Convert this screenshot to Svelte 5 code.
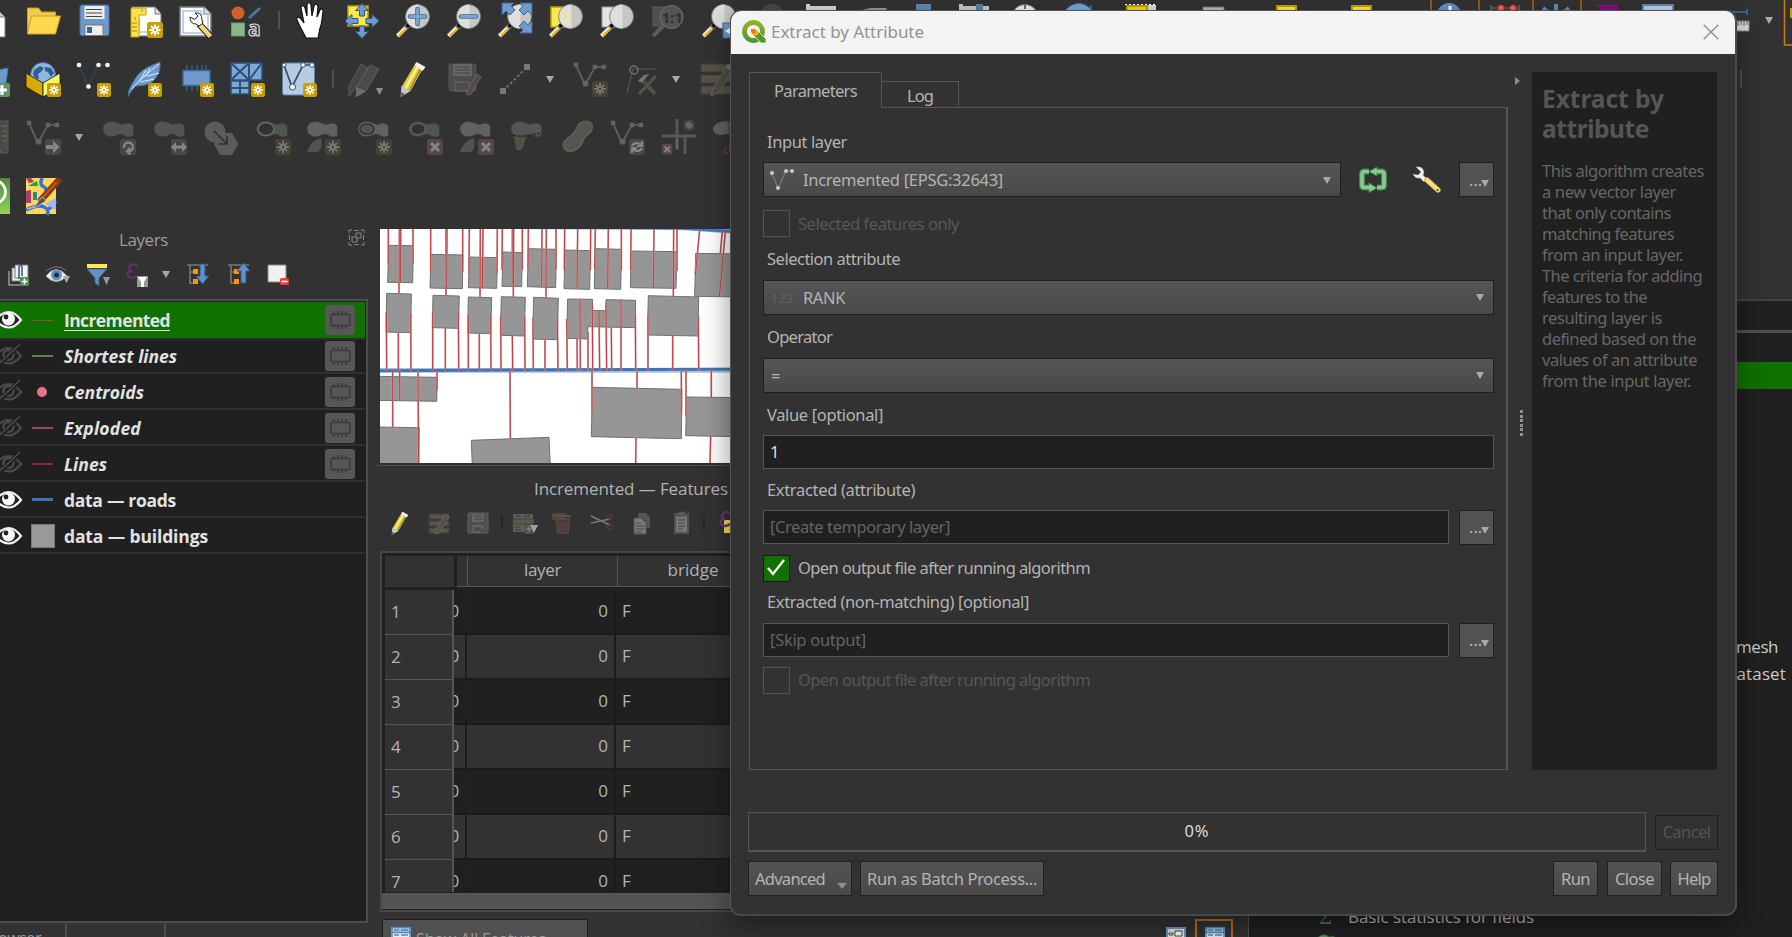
<script>
  const fileBar = [
    ['page', 51], ['folder', 51], ['floppy', 51], ['layout', 51], ['manager', 51], ['style', 51], ['sep', 14],
    ['hand', 51], ['pan', 50], ['zoomIn', 51], ['zoomOut', 51], ['zoomFull', 51], ['zoomSel', 51], ['zoomLayer', 51],
    ['zoomNative', 51], ['zoomLast', 51]
  ];
  const layerBar = [
    ['addVec', 51], ['globe', 51], ['newShp', 51], ['feather', 51], ['chip', 51], ['mesh', 52], ['vbox', 51], ['sep', 17],
    ['pencils', 46], ['pencil', 51], ['saveEdit', 52], ['segment', 50], ['drop', 20], ['newFeat', 60], ['tools', 48],
    ['drop', 16], ['rows', 66]
  ];
  const editBar = [
    ['ruler', 51], ['moveFeat', 51], ['drop', 22], ['rotate', 57], ['scale', 46], ['simplify', 58], ['addRing', 43],
    ['addPart', 58], ['fillRing', 44], ['delRing', 58], ['delPart', 44], ['reshape', 57], ['offset', 46], ['split', 52],
    ['trim', 52], ['merge', 40]
  ];
  const layers = [
    { name: 'Incremented', w: 106, kind: 'on', sym: 'line', color: '#965033', chip: true },
    { name: 'Shortest lines', w: 113, kind: 'off', sym: 'line', color: '#5f7f52', chip: true },
    { name: 'Centroids', w: 80, kind: 'off', sym: 'dot', color: '#e8718d', chip: true },
    { name: 'Exploded', w: 77, kind: 'off', sym: 'line', color: '#a34560', chip: true },
    { name: 'Lines', w: 43, kind: 'off', sym: 'line', color: '#8f2c32', chip: true },
    { name: 'data — roads', w: 112, kind: 'vis', sym: 'road', color: '#3f73b5' },
    { name: 'data — buildings', w: 144, kind: 'vis', sym: 'box', color: '#999' }
  ];
  const tableTools = [
    ['toggle', 40], ['multi', 38], ['tsave', 40], ['sep', 8], ['trow', 38], ['trash', 37], ['cut', 41], ['copy', 39],
    ['paste', 39], ['sep', 8], ['selx', 44]
  ];
  const help = [
    ['This algorithm creates', 162], ['a new vector layer', 134], ['that only contains', 129], ['matching features', 132],
    ['from an input layer.', 141], ['The criteria for adding', 160], ['features to the', 105], ['resulting layer is', 120],
    ['defined based on the', 154], ['values of an attribute', 155], ['from the input layer.', 149]
  ];
  const rows = [1, 2, 3, 4, 5, 6, 7];

  const buildings = [
    '56,76 130,77 128,188 53,187', '183,103 279,105 277,206 180,204', '298,111 382,113 380,205 295,203',
    '399,96 457,98 455,200 396,199', '475,86 559,88 557,203 472,200', '585,90 661,92 659,208 582,206',
    '676,86 755,88 752,208 673,206', '784,93 921,95 918,205 781,203', '977,100 1200,103 1196,232 974,229',
    '50,220 124,222 122,338 48,336', '189,226 268,228 265,325 187,323', '295,231 365,233 362,341 293,339',
    '394,230 466,232 463,348 391,346', '491,232 565,235 562,359 488,357',
    '593,237 668,238 667,271 707,272 708,239 797,241 795,323 654,320 652,357 590,355',
    '835,227 986,231 984,348 832,345', '20,469 202,472 200,544 20,541', '20,621 148,623 146,740 20,740',
    '304,661 537,652 541,740 307,740', '667,502 936,508 934,656 664,650', '950,531 1200,534 1200,652 947,647'
  ];
  const reds = [
    '55,27 55,133', '129,27 129,133', '88,27 88,187', '92,27 92,187', '87,187 87,222', '182,27 182,155', '228,27 228,228',
    '231,27 230,205', '278,27 278,155', '298,27 297,160', '331,27 330,232', '339,27 337,205', '382,27 381,160', '397,27 396,150',
    '427,27 427,200', '431,27 430,232', '457,27 457,150', '475,27 474,145', '516,27 515,200', '529,27 528,234', '558,27 558,147',
    '584,27 583,150', '623,27 621,206', '662,27 661,150', '676,27 674,147', '715,27 713,207', '754,27 754,150', '783,27 782,150',
    '852,27 850,205', '911,27 910,229', '921,27 921,152', '989,30 976,165', '1057,34 1051,100', '1066,36 1048,231',
    '49,275 50,452', '85,337 85,452', '122,280 123,452', '188,275 188,452', '226,323 226,452', '265,275 266,452', '295,283 295,452',
    '328,340 328,452', '362,285 363,452', '392,287 393,452', '427,347 428,452', '464,290 465,452', '489,292 490,452',
    '525,358 525,452', '562,294 564,452', '590,297 592,452', '621,355 622,452', '630,236 631,452', '654,335 654,452',
    '667,252 668,452', '687,270 689,452', '708,253 710,452', '724,320 725,452', '753,238 753,452', '796,280 797,452',
    '834,285 834,452', '908,347 908,452', '985,290 986,452', '68,452 68,621', '89,452 89,542', '144,452 146,729', '201,452 201,510',
    '420,452 421,659', '666,452 666,578', '801,449 801,506', '934,449 934,583', '948,449 948,590', '1024,447 1024,534',
    '798,651 797,729', '1022,646 1020,729'
  ];

  function fit(node, width) {
    node.style.letterSpacing = '0px';
    const natural = node.getBoundingClientRect().width;
    node.style.letterSpacing = (width - natural) / node.textContent.length + 'px';
  }
</script>

{#snippet badge(x, y, s = 16)}
  <g transform="translate({x} {y}) scale({s / 16})">
    <rect width="16" height="16" rx="2.5" fill="#c4a000" />
    <path d="M8 2.5v11M2.5 8h11M4 4l8 8M12 4l-8 8" stroke="#fff" stroke-width="1.8" />
    <circle cx="8" cy="8" r="1.2" fill="#c4a000" />
  </g>
{/snippet}

{#snippet dim(x, y, kind)}
  <g transform="translate({x} {y})" fill="none" stroke="#858585" stroke-width="1.8">
    <rect width="16" height="16" rx="2.5" stroke="none" fill={kind === 'star' ? '#454236' : kind === 'x' ? '#564749' : '#444849'} />
    {#if kind === 'star'}<path d="M8 2v12M2 8h12M4 4l8 8M12 4l-8 8" stroke-width="1.5" /><circle cx="8" cy="8" r="2" fill="#454236" stroke-width="1" />
    {:else if kind === 'x'}<path d="M4 4l8 8M12 4l-8 8" stroke-width="3" />
    {:else if kind === 'arrow'}<path d="M1 6h7V1.500l6.500 6.500L8 14.500V10H1z" fill="#858585" stroke="none" />
    {:else if kind === 'both'}<path d="M0 8l5-5v3.500h6V3l5 5-5 5V9.500H5V13z" fill="#858585" stroke="none" />
    {:else if kind === 'turn'}<path d="M4 9a4.500 4.500 0 1 1 4.500 3.500M10 9l-3 3.500 3.500 3" stroke-width="2.300" />
    {:else}<path d="M3 7a5 4 0 0 1 9-1M13 2v5H8M13 9a5 4 0 0 1-9 1M3 14V9h5" stroke-width="2.200" />{/if}
  </g>
{/snippet}

{#snippet blob(fill)}
  <path d="M2 11C1 5 7 1 14 3c4 1 6 3 9 2 5-2 9 0 9.500 3v7c0 3-4.500 4-8 2-4-3-7-1.500-10 0C9 19 3 17 2 11z" {fill} stroke="#3d3e3e" />
{/snippet}

{#snippet nodes(stroke, fill)}
  <path d="M4 4l9 20L23 6h9" fill="none" {stroke} stroke-width="2" />
  <path d="M2 2h4v4H2zM11 20h5v5h-5zM21 4h4v4h-4zM30 4h4v4h-4z" {fill} {stroke} stroke-width=".6" />
{/snippet}

{#snippet lens(kind)}
  <g transform="translate(-1.5 0)">
    <path d="M4 34l11-11" stroke="#777" stroke-width="5" />
    <path d="M4 34l8-8" stroke="#fff" stroke-width="3.400" /><path d="M5 34l7-7" stroke="#f5b400" stroke-width="2" />
    <circle cx="14.500" cy="23.500" r="1.900" fill="#000" />
    <circle cx="24" cy="14.500" r="12" fill="#c6c6c5" stroke="#777" stroke-width=".8" />
    <path d="M25 2.500a12 12 0 0 0 0 24z" fill="#dedede" />
    {#if kind === '+' || kind === '-'}
      <path d={kind === '+' ? 'M16.500 14.500h15M24 7v15' : 'M16.500 14.500h15'} stroke="#3b6795" stroke-width="4.600" stroke-linecap="round" />
      <path d={kind === '+' ? 'M16.500 14.500h15M24 7v15' : 'M16.500 14.500h15'} stroke="#7ba3d2" stroke-width="2.800" stroke-linecap="round" />
    {/if}
  </g>
{/snippet}

{#snippet pen(main, light, dark)}
  <g transform="translate(-1.5 0)">
    <path d="M8 26L21 4l8 4-12 22z" fill={main} /><path d="M12 27L24 6" stroke={light} stroke-width="2.600" /><path d="M16 29L27 8" stroke={dark} stroke-width="1.500" />
    <path d="M8 25l9 5-10 6z" fill="#c8c8c8" /><path d="M7 36l1-5 3 2z" fill="#555" /><path d="M21 4l2-3 9 5-3 4z" fill="#f4f4f4" />
  </g>
{/snippet}

{#snippet greyPen()}
  <path d="M14 27L27 6l6 4-13 21-8 4z" fill="#504c49" stroke="#696764" stroke-width=".8" /><path d="M27 6l2-3 6 4-2 4z" fill="#777" />
{/snippet}

{#snippet icon(name, size = 36)}
  <svg class="icon" width={size} height={size} viewBox="0 0 36 36" fill="none" aria-hidden="true">
    {#if name === 'page'}<path d="M4 6h18l9 9v20H4z" fill="#fff" stroke="#777" /><path d="M22 6v9h9z" fill="#ccc" stroke="#777" />
    {:else if name === 'folder'}
      <path d="M2.500 31V6h11l3 4h14v5" fill="#f5c94a" stroke="#c49a2a" /><path d="M2.500 32l4-18h29l-5 18z" fill="#fdd94f" stroke="#c8a029" />
    {:else if name === 'floppy'}
      <rect x="4" y="3" width="29" height="30.500" rx="2" fill="#6f99ca" stroke="#4673a5" /><rect x="8.500" y="4" width="20" height="13" fill="#eee" />
      <path d="M10 7.500h16M10 11h16M10 14.500h16" stroke="#444" stroke-width="1.200" /><rect x="9" y="23" width="18" height="10.500" fill="#eee" stroke="#777" /><rect x="11" y="25" width="5" height="6" fill="#32659a" />
    {:else if name === 'layout'}
      <path d="M5 5h23l6 7v22H5z" fill="#fff" stroke="#777" /><path d="M28 5v7h6" fill="#ddd" stroke="#777" /><path d="M12 17v13h12" stroke="#8fb0df" />
      <path d="M4 6h15v7h-7v22H4z" fill="#ffe04d" stroke="#c4a000" /><path d="M8 15v3M10 21H5M10 25H5M10 29H5M15 7v3" stroke="#a88900" />{@render badge(20, 20)}
    {:else if name === 'manager'}
      <path d="M2 5h24l7 7v22H2z" fill="#fff" stroke="#777" stroke-width="1.500" /><path d="M26 5v7h7" fill="#ddd" stroke="#777" /><path d="M5 9h18v3h7v19H5z" stroke="#a9c4ea" stroke-width="1.500" />
      <path d="M21 22l12 13" stroke="#222" stroke-width="6.500" /><path d="M22 23l10.500 11.500" stroke="#f4d47a" stroke-width="4.500" />
      <path d="M17 11q7-1 7 7l1 3-4 3-3-2q-6 0-6-7l5 2.500 3-3.500z" fill="#fff" stroke="#222" />
    {:else if name === 'style'}
      <circle cx="9" cy="11" r="6.500" fill="#d4602f" /><path d="M20 16L31 6" stroke="#4b739b" stroke-width="3" /><rect x="2.500" y="21" width="13" height="13" fill="#8ab58d" stroke="#6d9b70" />
      <text x="19" y="33.500" font-size="21" font-weight="700" fill="#333" stroke="#ddd" stroke-width="1.200">a</text>
    {:else if name === 'hand'}
      <path d="M12 36C8 28 6 25 3 18c-1-3 2-4 4-1l3 4L7 6c0-3 3-3 4 0l2 8L13 3c0-3 4-3 4 0l1 11 2-10c1-3 4-2 4 1l-1 10 3-7c1-2 4-1 3 2-1 6-1 12-3 16l-2 10z" fill="#fff" stroke="#111" stroke-width="1.200" />
    {:else if name === 'pan'}
      <rect x="4" y="4" width="20" height="20" fill="#fce94f" stroke="#c4a000" stroke-width="1.500" />
      <path d="M18 1.500l6.500 7h-4V14h-5V8.500h-4zM18 36.500l6.500-7h-4V24h-5v5.500h-4zM1 19l7-6.500v4h6v5H8v4zM35 19l-7-6.500v4h-6v5h6v4z" fill="#6f9bcc" stroke="#32577e" />
    {:else if name === 'zoomIn'}{@render lens('+')}
    {:else if name === 'zoomOut'}{@render lens('-')}
    {:else if name === 'zoomFull'}
      {@render lens('')}<path d="M5 1h12l-3 3 4 4-5 5-4-4-4 4zM35 1H23l3 3-4 4 5 5 4-4 4 4zM35 31H23l3-3-4-4 5-5 4 4 4-4z" fill="#6f9bcc" stroke="#3b6795" />
    {:else if name === 'zoomSel'}<rect x="3" y="5" width="20" height="20" fill="#fce94f" stroke="#c4a000" stroke-width="1.500" />{@render lens('')}<path d="M13 8h10v13H15q-4-6-2-13z" fill="#e9e4b4" opacity=".8" />
    {:else if name === 'zoomLayer'}<rect x="3" y="5" width="20" height="20" fill="#e4e4e2" stroke="#999" />{@render lens('')}
    {:else if name === 'zoomNative'}
      <rect x="3" y="5" width="18" height="19" fill="#505050" stroke="#5c5c5c" /><path d="M3 34l10-10" stroke="#5c5a54" stroke-width="4" /><circle cx="21.500" cy="15" r="11.500" fill="#545454" stroke="#707070" />
      <text x="11.500" y="20.500" font-size="15" font-weight="700" fill="#303030">1:1</text>
    {:else if name === 'zoomLast'}{@render lens('')}<rect x="22" y="21" width="20" height="15" fill="#6f9bcc" stroke="#3b6795" /><path d="M32 24l-8 5 8 5" fill="#fff" />
    {:else if name === 'addVec'}<path d="M9 8l26 -5 0 20-10 12H6z" fill="#6f99ca" transform="translate(-.5 4) skewX(-8)" stroke="#4673a5" /><rect x="20" y="22" width="16" height="14" rx="2" fill="#5c9462" /><path d="M28 24v10M23 29h10" stroke="#fff" stroke-width="3" />
    {:else if name === 'globe'}
      <circle cx="18" cy="14" r="12.500" fill="#8fb6e0" stroke="#44719f" /><path d="M9 9l6-4 4 2-3 4-3 2 1 5-4-1-2-4zM20 6l6 1 3 5-3 4-3-5-3-1z" fill="#2d5f94" />
      <path d="M1 12l17 10v14L1 26z" fill="#d9ab00" stroke="#111" stroke-width=".8" /><path d="M35 12L18 22v14l17-10z" fill="#fdf568" stroke="#111" stroke-width=".8" />{@render badge(22, 22, 14)}
    {:else if name === 'newShp'}
      <path d="M3 4l9 21L22 4h10" stroke="#2c4057" stroke-width="2" /><g fill="#fff"><circle cx="3" cy="4" r="2.300" /><circle cx="12.500" cy="25.500" r="2.300" /><circle cx="22.500" cy="4" r="2.300" /><circle cx="31.500" cy="4" r="2.300" /></g>{@render badge(21, 22, 14)}
    {:else if name === 'feather'}
      <path d="M1 36c0-8 4-13 7-18C13 9 22 5 33 1c1 8-2 15-8 20-5 3-10 4-16 4-3 3-6 6-8 11z" fill="#6b9ccd" stroke="#416b96" stroke-width=".8" /><path d="M5 28C12 19 22 11 32 3M12 21l7-12M18 16l5-9M14 21l13-3M20 15l12-3" stroke="#e4eef8" />{@render badge(21, 22, 14)}
    {:else if name === 'chip'}
      <path d="M9 4v26M14 4v26M19 4v26M24 4v26M28 4v26" stroke="#3e5f83" stroke-width="1.400" /><rect x="5" y="9.500" width="27" height="15" fill="#6f99ca" stroke="#3f6a99" stroke-width="1.500" />{@render badge(22, 22, 14)}
    {:else if name === 'mesh'}
      <path d="M2 2h31v17H2zM2 20h18v13H2z" fill="#7ba7d6" stroke="#2d5077" stroke-width="1.500" /><path d="M2 2l18 17M20 2L2 19M20 2v17M20 19L33 2M11 20v13M2 27h18" stroke="#2d5077" stroke-width="2" />{@render badge(22, 22, 14)}
    {:else if name === 'vbox'}
      <rect x="1.500" y="2" width="32" height="32" rx="2" fill="#b7cce3" stroke="#5b82ab" /><path d="M3 4l8 22L22 4h10" stroke="#33516f" stroke-width="1.700" /><g fill="#fff" stroke="#33516f"><circle cx="3" cy="4" r="2" /><circle cx="11.500" cy="26" r="3" /><circle cx="22" cy="4" r="2.300" /><circle cx="31" cy="4" r="2.300" /></g>{@render badge(22, 22, 14)}
    {:else if name === 'pencils'}<path d="M3 25L15 3l7 4L9 28l-6 7z" fill="#474544" stroke="#5c5a58" /><path d="M11 26L24 4l9 4-13 22-10 6z" fill="#4d4947" stroke="#5f5d5b" /><path d="M10 26l10 4-10 6z" fill="#6b6b6b" /><path d="M30 27h7l-3.500 7z" fill="#8f8f8f" />
    {:else if name === 'pencil'}{@render pen('#dccb45', '#f8ee8e', '#9c8a1c')}
    {:else if name === 'saveEdit'}<rect x="3" y="3" width="27" height="27" rx="2" fill="#4a4c4f" stroke="#555" /><rect x="7" y="3" width="19" height="12" fill="#666" /><path d="M9 6h15M9 9h15M9 12h15" stroke="#444" /><rect x="9" y="21" width="14" height="9" stroke="#696969" /><path d="M21 30L31 13l4 3-10 17-4 1z" fill="#53494a" stroke="#686061" />
    {:else if name === 'segment'}<path d="M6 30L30 6" stroke="#6a6a6a" stroke-width="2" stroke-dasharray="3 2" /><path d="M3 27h6v6H3zM27 3h6v6h-6z" fill="#777" />
    {:else if name === 'newFeat'}{@render nodes('#5c5c5c', '#666')}{@render dim(20, 20, 'star')}
    {:else if name === 'tools'}<path d="M1 32L7 8h22" stroke="#4f4f4f" stroke-width="1.500" /><circle cx="8" cy="9" r="4" stroke="#707070" stroke-width="1.500" /><path d="M13 33l17-18" stroke="#54534a" stroke-width="3" /><path d="M12 20l6-6 5-1-7 9z" fill="#727272" /><path d="M18 21l11 12" stroke="#59513f" stroke-width="4" />
    {:else if name === 'rows'}<path d="M2 3h34v8H2zM2 14h34v8H2zM2 25h34v8H2z" fill="#555346" stroke="#424139" />{@render greyPen()}
    {:else if name === 'ruler'}<path d="M0 2h34v32H0z" fill="#4d4a45" stroke="#5e5b55" /><path d="M27 7h6M29 12h4M27 17h6M29 22h4M17 22l10 11" stroke="#74716c" />
    {:else if name === 'moveFeat'}{@render nodes('#5c5c5c', '#666')}{@render dim(20, 20, 'arrow')}
    {:else if name === 'rotate'}{@render blob('#525552')}{@render dim(19, 20, 'turn')}
    {:else if name === 'scale'}{@render blob('#525552')}{@render dim(19, 20, 'both')}
    {:else if name === 'simplify'}<circle cx="11" cy="13" r="10.500" fill="#5a5b5a" /><path d="M10 25l6-11h12l6 11-6 11H16z" fill="#5b5c5d" /><path d="M10 12l12 12M23 17v8h-8" stroke="#303030" stroke-width="1.700" />
    {:else if name === 'addRing'}{@render blob('#505550')}<ellipse cx="11" cy="10" rx="8" ry="6.500" fill="#323232" stroke="#6a6a6a" stroke-width="1.500" />{@render dim(20, 20, 'star')}
    {:else if name === 'addPart'}{@render blob('#606160')}<path d="M2 33q3-11 14-14 2 15-6 14z" fill="#505450" />{@render dim(20, 20, 'star')}
    {:else if name === 'fillRing'}{@render blob('#606160')}<ellipse cx="11" cy="10" rx="7" ry="5" fill="#555" stroke="#303030" stroke-width="1.500" />{@render dim(20, 20, 'star')}
    {:else if name === 'delRing'}{@render blob('#505550')}<ellipse cx="11" cy="10" rx="7" ry="5.500" fill="#323232" stroke="#666" />{@render dim(20, 20, 'x')}
    {:else if name === 'delPart'}{@render blob('#606160')}<path d="M2 33q3-11 14-14 2 15-6 14z" fill="#505450" />{@render dim(20, 20, 'x')}
    {:else if name === 'reshape'}<path d="M4 14l3 16q4 4 7-2l4-13z" fill="#535046" />{@render blob('#535653')}<path d="M4 16q12 3 27-2" stroke="#292929" stroke-width="1.500" stroke-dasharray="3 2" />
    {:else if name === 'offset'}<path d="M18 7c5-8 18-5 13 5-2 4-6 3-8 9-2 8-12 15-18 9-5-6 3-11 6-13 5-3 5-7 7-10z" fill="#525653" stroke="#625c4e" stroke-width="2" />
    {:else if name === 'split'}{@render nodes('#5c5c5c', '#666')}{@render dim(20, 20, 'cycle')}
    {:else if name === 'trim'}<path d="M16 0v16M1 17h34M24 17v18M16 17v14" stroke="#575757" stroke-width="3" /><path d="M16 20v9" stroke="#80706f" /><g transform="translate(23 1) scale(.65)">{@render dim(0, 0, 'star')}</g><g transform="translate(1 25) scale(.65)">{@render dim(0, 0, 'x')}</g>
    {:else if name === 'merge'}<path d="M22 2c-20 0-20 14-7 14 5-2 9 0 11-3z" fill="#606160" /><path d="M21 2l4 32M20 28q-5 4-1 7 6-2 3-9" stroke="#654044" stroke-width="1.500" />
    {/if}
  </svg>
{/snippet}

{#snippet cells(items)}
  {#each items as [name, w]}
    <span class="cell" style:width="{w}px">
      {#if name === 'sep'}<i class="sep"></i>{:else if name === 'drop'}<i class="drop"></i>{:else}{@render icon(name)}{/if}
    </span>
  {/each}
{/snippet}

{#snippet tool(name)}
  <svg class="icon" width="24" height="24" viewBox="0 0 24 24" fill="none" aria-hidden="true">
    {#if name === 'group'}<path d="M2 8v14h14" stroke="#999" stroke-width="1.500" /><path d="M5 5h12v13H5z" fill="#e8e8e8" stroke="#888" /><path d="M8 2h13v13H8z" fill="#f2f2f2" stroke="#777" /><path d="M12 16V4q2-5 3 0v9" stroke="#365578" stroke-width="1.500" /><rect x="13" y="14" width="9" height="9" rx="1.500" fill="#54875a" /><path d="M17.500 15.500v6M14.500 18.500h6" stroke="#fff" stroke-width="1.700" />
    {:else if name === 'eye'}<path d="M0 13q10-13 21 0Q10 24 0 13z" fill="#eee" stroke="#aaa" /><path d="M0 8q10-8 20-1" stroke="#777" /><circle cx="10.500" cy="12" r="5.500" fill="#6291c1" /><circle cx="10.500" cy="12" r="2.500" fill="#162f49" /><path d="M17 13h7l-3.500 7z" fill="#aaa" />
    {:else if name === 'filter'}<path d="M1 6h20l-8 9v8l-4-3v-5z" fill="#6490c2" stroke="#37618c" /><path d="M1 1h20v4H1z" fill="#fce94f" /><path d="M17 14h7l-3.500 8z" fill="#999" />
    {:else if name === 'expr'}<path d="M13 4Q9-1 5 3q-3 4 2 5-6 1-4 5 4 4 9 0" stroke="#5c3565" stroke-width="2.200" /><rect x="12" y="13" width="11" height="11" fill="#999" /><path d="M13 14h9l-3 5v5h-3v-5z" fill="#fff" />
    {:else if name === 'expand' || name === 'collapse'}<path d="M0 2h21M3 2v18h5M3 9h5" stroke="#777" stroke-width="1.600" /><path d="M6 6h5v5H6zM6 16h5v5H6z" fill="#f79511" />
      {#if name === 'expand'}<path d="M13 1h5v12h4l-6.500 8L9 13h4z" fill="#5f91ca" stroke="#32597f" />{:else}<path d="M13 20h5V8h4L15.500 0 9 8h4z" fill="#5f91ca" stroke="#32597f" />{/if}
    {:else if name === 'remove'}<path d="M2 2h18v17H2z" fill="#f0f0f0" stroke="#888" /><rect x="14" y="15" width="9" height="7" rx="1.500" fill="#e73b43" /><path d="M15.500 18.500h6" stroke="#fff" stroke-width="1.600" />
    {:else if name === 'toggle'}<g transform="scale(.67)">{@render pen('#dccb45', '#f8ee8e', '#9c8a1c')}</g>
    {:else if name === 'multi'}<path d="M2 3h20v5H2zM2 10h20v5H2zM2 17h20v5H2z" fill="#565447" stroke="#424139" /><path d="M8 20L18 4l4 2-10 16-4 1z" fill="#514d4a" stroke="#6a6764" />
    {:else if name === 'tsave'}<rect x="2" y="2" width="20" height="20" rx="1" fill="#4b4f4e" stroke="#626459" /><path d="M6 3h12v8H6z" fill="#666" /><path d="M8 5h9M8 8h9" stroke="#444" /><path d="M7 15h9v6H7z" stroke="#777" /><path d="M14 22l7-12 3 2-7 10z" fill="#5b4d4e" />
    {:else if name === 'trow'}<path d="M0 3h20v18H0z" fill="#5c5e61" /><path d="M0 8h21v5H0z" fill="#5b594b" stroke="#434238" /><path d="M2 5h6M11 5h6M2 16h6M2 19h6" stroke="#393939" /><rect x="11" y="13" width="10" height="10" rx="2" fill="#565343" /><path d="M13 18h6M16 15v6" stroke="#888" /><path d="M17 14h8l-4 8z" fill="#a0a0a0" />
    {:else if name === 'trash'}<path d="M1 2h14v7H1z" fill="#4b483d" /><path d="M3 5h17" stroke="#674d50" stroke-width="2" /><path d="M5 8h14l-2 14H7zM9 11v9M12 11v9M15 11v9" fill="#4b3b3c" stroke="#5d484a" stroke-width="1.300" />
    {:else if name === 'cut'}<path d="M1 5l19 9M1 12l19-4" stroke="#777" stroke-width="1.700" /><circle cx="20" cy="16" r="2.500" stroke="#5f3f42" /><circle cx="20" cy="6" r="2.500" stroke="#5f3f42" />
    {:else if name === 'copy'}<path d="M8 2h8l4 4v11H8z" fill="#555" /><path d="M4 7h7l5 5v11H4z" fill="#797979" stroke="#505050" /><path d="M6 12h5M6 15h8M6 18h8M6 21h6" stroke="#4c4c4c" />
    {:else if name === 'paste'}<path d="M5 2h15v21H5z" fill="#555148" /><path d="M7 5h11v16H7z" fill="#757575" /><path d="M9 1h7v4H9zM9 9h7M9 12h7M9 15h7M9 18h5" stroke="#484848" fill="#606060" />
    {:else if name === 'selx'}<path d="M6 9h18v13H6z" fill="#f2df42" /><path d="M13 3Q9-1 5 3q-3 4 2 5-6 1-4 5 4 4 9 0" stroke="#66366f" stroke-width="2.500" />{/if}
  </svg>
{/snippet}

{#snippet layerEye(on)}
  <svg class="eye" width="36" height="26" viewBox="0 0 36 26" fill="none" aria-hidden="true">
    {#if on}<path d="M-5 13Q9-3 21 13 9 28-5 13z" fill="#222" stroke="#f2f2f2" stroke-width="2.200" /><circle cx="8.500" cy="12" r="6.500" fill="#f7f7f7" /><circle cx="6" cy="10" r="2.400" fill="#222" />
    {:else}<path d="M-5 13Q9-3 21 13 9 28-5 13z" stroke="#4a4a4a" stroke-width="2.200" /><circle cx="8.500" cy="12" r="5" stroke="#4a4a4a" stroke-width="2.500" /><path d="M0 21L20 1" stroke="#1f1f1f" stroke-width="4" /><path d="M0 20L20 1" stroke="#4a4a4a" stroke-width="1.700" />{/if}
  </svg>
{/snippet}

{#snippet dots()}
  <button class="dots"><span>...</span><i class="drop"></i></button>
{/snippet}

<div class="desktop">
  <div class="bars">
    <div class="bar first">{@render cells(fileBar)}
      <div class="peek">
        <svg width="1061" height="46" viewBox="731 0 1061 46" fill="none" aria-hidden="true">
          <circle cx="772" cy="16" r="12" fill="#4a4a4a" />
          <path d="M806 4h4v2h26v9h-30z" fill="#d8d8d8" /><path d="M862 10l8-2h17l-3 5h-18z" fill="#989898" /><path d="M916 4h15v10h-15z" fill="#6289b9" />
          <path d="M959 4h4v2h26v9h-30z" fill="#c9c9c9" /><path d="M976 4h7v10h-7z" fill="#567fad" /><circle cx="1025" cy="18" r="13.500" fill="#f0f0f0" stroke="#777" /><path d="M1025 5v4M1015 10l2 2M1035 10l-2 2" stroke="#444" stroke-width="1.500" />
          <path d="M1062 14q14-18 29-5V5v10z" fill="#79a7da" stroke="#4579ae" /><path d="M1126 5h30v7h-30z" fill="#ddd" /><path d="M1125 4.500h32" stroke="#fff" stroke-dasharray="2 2" /><path d="M1127 6h20v8h-20z" fill="#f4d91e" stroke="#c4a000" stroke-width="2" />
          <path d="M1203 7h21v8h-21z" fill="#bbb" stroke="#777" /><path d="M1277 6h19v8h-19zM1352 6h19v8h-19z" fill="#fce94f" stroke="#c4a000" stroke-width="2" />
          <circle cx="1449" cy="15" r="12" fill="#6590c2" /><path d="M1450 6v4" stroke="#fff" stroke-width="3" /><path d="M1431 0v14M1479 0v14M1533 0v14M1581 0v14" stroke="#ce781c" stroke-width="1.200" />
          <path d="M1491 5v8M1519 5v8M1491 8h28" stroke="#666" stroke-width="1.500" /><circle cx="1501" cy="8" r="3.300" fill="#e66" stroke="#b11" /><circle cx="1513" cy="8" r="3.300" fill="#e66" stroke="#b11" />
          <path d="M1543 8l5 4M1556 4v8M1569 8l-5 4" stroke="#5b8cc2" stroke-width="4" /><path d="M1597 6h20v3h-14l5 5" stroke="#92098f" stroke-width="2.500" /><path d="M1643 5h30v9h-30z" fill="#b9d1e8" stroke="#5d88b5" stroke-width="2" />
          <path d="M1720 12h27M1747 9v6" stroke="#3f6288" stroke-width="2" /><path d="M1735 21h14v10h-14z" fill="#ddd" stroke="#888" /><path d="M1738 21v5M1741 21v4M1744 21v5M1747 21v4" stroke="#555" />
          <path d="M1765 17h8l-4 7z" fill="#aaa" /><path d="M1784.500 -1v46h10" stroke="#ce781c" stroke-width="1.500" /><path d="M1791 8v10" stroke="#c4a000" stroke-width="2" />
        </svg>
      </div>
    </div>
    <div class="bar"><div class="group">{@render cells(layerBar)}</div><i class="sep far"></i></div>
    <div class="bar">{@render cells(editBar)}</div>
    <div class="bar last">
      <span class="plug green"><svg width="36" height="36" viewBox="0 0 36 36" aria-hidden="true"><defs><linearGradient id="gr" x2="0" y2="1"><stop stop-color="#4d8b3c" /><stop offset="1" stop-color="#92d060" /></linearGradient></defs><path d="M0 0h36v36H0z" fill="url(#gr)" /><circle cx="20" cy="14" r="11.500" fill="none" stroke="#fff" stroke-width="2.700" /></svg></span>
      <span class="plug"><svg width="36" height="36" viewBox="0 0 36 36" fill="none" aria-hidden="true"><path d="M1 0h30v36H1z" fill="#ffd75b" /><path d="M1 0h5l3 4-5 1zM1 13l5-1v13H1z" fill="#b03b6e" /><path d="M3 8l9-5 1 5z" fill="#18a83a" /><path d="M17 0q-3 7 2 9t-1 14M1 32q12-6 18-3t3 8M31 23l-7 8" stroke="#3b70d8" stroke-width="3.500" /><path d="M20 26l11-6v12z" fill="#9cb8f3" /><path d="M8 14h4v8H8z" fill="#268a89" /><path d="M16 22L33 3" stroke="#8b3a10" stroke-width="6.500" stroke-linecap="round" /><path d="M17 20L32 4" stroke="#b25a22" stroke-width="2" /><path d="M18 19l3 4-10 6-9 2 8-3 5-7z" fill="#555" stroke="#ddd" stroke-width=".7" /></svg></span>
    </div>
  </div>

  <div class="body">
    <aside class="dock">
      <header><span use:fit={49}>Layers</span>
        <svg class="float" width="17" height="17" viewBox="0 0 17 17" fill="none" stroke="#858585" aria-hidden="true"><path d="M1 4V1h3M13 1h3v3M16 13v3h-3M4 16H1v-3M1.500 6v5M15.500 6v5M6 1.500h5M6 15.500h5M8 4h5v5H8zM8 8H4v5h5V9" /></svg>
      </header>
      <div class="tools">
        <span style:width="37px">{@render tool('group')}</span><span style:width="42px">{@render tool('eye')}</span><span style:width="38px">{@render tool('filter')}</span><span style:width="40px">{@render tool('expr')}</span>
        <span style:width="18px"><i class="drop"></i></span><span style:width="48px">{@render tool('expand')}</span><span style:width="33px">{@render tool('collapse')}</span><span style:width="44px">{@render tool('remove')}</span>
      </div>
      <div class="tree">
        {#each layers as l}
          <div class="layer {l.kind}">
            {@render layerEye(l.kind !== 'off')}
            <span class="sym"><i class={l.sym} style:background={l.color}></i></span>
            <b use:fit={l.w}>{l.name}</b>
            {#if l.chip}
              <svg class="mem" width="30" height="30" viewBox="0 0 30 30" fill="none" aria-hidden="true"><rect width="30" height="30" rx="3" fill="#575757" /><path d="M9 6v18M13 6v18M17 6v18M21 6v18" stroke="#3d3d3d" stroke-width="1.500" /><rect x="6" y="9.500" width="19" height="11" rx="1" fill="#575757" stroke="#3b3b3b" stroke-width="1.500" /></svg>
            {/if}
          </div>
        {/each}
      </div>
      <div class="tabsb"><span class="bt"><em use:fit={59}>Browser</em></span><span class="bt two"><em>Layers</em></span></div>
    </aside>

    <main>
      <svg class="map" width="868" height="234" viewBox="30 27 2604 702" aria-hidden="true">
        <path d="M30 27h2610v702H30z" fill="#fff" />
        <path d="M30 18L940 24 1200 42" stroke="#9db9de" stroke-width="13" fill="none" /><path d="M640 20L940 25 1200 42" stroke="#447abc" stroke-width="9" fill="none" />
        {#each buildings as b}<polygon points={b} fill="#969696" stroke="#707070" stroke-width="3" />{/each}
        <path d="M30 451H1200" stroke="#a8c1e1" stroke-width="14" /><path d="M30 452L1200 447" stroke="#3f75b7" stroke-width="9" />
        {#each reds as r}<polyline points={r} fill="none" stroke="#d6a0a2" stroke-width="5.500" /><polyline points={r} fill="none" stroke="#bd4246" stroke-width="3.400" />{/each}
      </svg>
      <div class="split"></div>
      <div class="ftitle"><span use:fit={194}>Incremented — Features</span></div>
      <div class="ftools">
        {#each tableTools as [n, w]}
          <span style:width="{w}px">{#if n === 'sep'}<i class="sep dark"></i>{:else}{@render tool(n)}{/if}</span>
        {/each}
      </div>
      <div class="table">
        <div class="thead"><span class="corner"></span><span class="h0"></span><span class="h1"><em use:fit={37}>layer</em></span><span class="h2"><em use:fit={51}>bridge</em></span></div>
        {#each rows as r}
          <div class="trow" class:alt={r % 2 === 0}><span class="num">{r}</span><span class="c0"><em>0</em></span><span class="c1">0</span><span class="c2">F</span></div>
        {/each}
        <div class="scroll"></div>
      </div>
      <div class="status">
        <button class="show"><svg width="20" height="20" viewBox="0 0 20 20" aria-hidden="true"><path d="M0 0h20v20H0z" fill="#e8eef4" /><path d="M0 0h20v5H0z" fill="#a9c9e9" /><path d="M1 .5h18v19H1zM0 5.500h20M3 3h5M10 3h7M3 8h5M10 8h7" fill="none" stroke="#5385ba" stroke-width="1.500" /></svg><span use:fit={130}>Show All Features</span></button>
        <div class="views">
          <svg width="20" height="20" viewBox="0 0 20 20" aria-hidden="true"><path d="M1 1h18v19H1z" fill="#e8e8e8" stroke="#6e96c4" stroke-width="2" /><path d="M3 6h4v2H3zM9 4h7v5H9z" fill="#fff" stroke="#444" /></svg>
          <span class="active"><svg width="20" height="20" viewBox="0 0 20 20" aria-hidden="true"><path d="M0 0h20v20H0z" fill="#e8eef4" /><path d="M0 0h20v5H0z" fill="#a9c9e9" /><path d="M1 .5h18v19H1zM0 5.500h20M3 3h5M10 3h7M3 8h5M10 8h7" fill="none" stroke="#5385ba" stroke-width="1.500" /></svg></span>
        </div>
      </div>
    </main>

    <aside class="right">
      <div class="search"></div>
      <div class="picked"></div>
      <div class="algs"><span use:fit={42}>mesh</span><span use:fit={60}>dataset</span></div>
      <div class="stat"><b>Σ</b><span use:fit={186}>Basic statistics for fields</span></div>
      <svg class="sprout" width="22" height="12" viewBox="0 0 22 12" aria-hidden="true"><path d="M2 5q7-6 12-1l5-1-2 7H7z" fill="#62965f" stroke="#35633a" /></svg>
    </aside>
  </div>

  <section class="dialog">
    <div class="title">
      <svg width="24" height="24" viewBox="0 0 24 24" fill="none" aria-hidden="true"><defs><linearGradient id="q" x2="0" y2="1"><stop stop-color="#93b023" /><stop offset="1" stop-color="#589632" /></linearGradient></defs><circle cx="11.500" cy="11.500" r="9" stroke="url(#q)" stroke-width="4.800" /><path d="M11 11l5 0 8 8v4h-5l-8-8z" fill="#589632" stroke="#f2f2f2" stroke-width=".7" /><path d="M9 9h5l3 4-3 3-4-2z" fill="#f5b51d" /><path d="M9 9h4l1 4-3 1-2-2z" fill="#ee7913" /></svg>
      <span use:fit={153}>Extract by Attribute</span>
      <svg class="x" width="16" height="16" viewBox="0 0 16 16" aria-hidden="true"><path d="M.7 .7l14.600 14.600M15.300 .7L.7 15.300" stroke="#8b8b8b" stroke-width="1.300" /></svg>
    </div>
    <div class="upper">
      <div class="pane">
        <div class="tabs"><span class="tab on"><em use:fit={83}>Parameters</em></span><span class="tab"><em use:fit={26}>Log</em></span></div>
        <div class="form">
          <div class="row label"><span use:fit={80}>Input layer</span></div>
          <div class="row inputs">
            <div class="combo layerc"><svg width="26" height="24" viewBox="0 0 26 24" fill="none" aria-hidden="true"><path d="M3 5l6 15 8-17h6" stroke="#777" stroke-width="1.300" /><g fill="#c9c9c9"><circle cx="3" cy="5" r="2" /><circle cx="9" cy="20" r="2" /><circle cx="17" cy="3" r="2" /><circle cx="23" cy="3" r="2" /></g></svg><span use:fit={200}>Incremented [EPSG:32643]</span><i class="drop"></i></div>
            <svg class="loop" width="28" height="26" viewBox="0 0 28 26" fill="none" aria-hidden="true"><g stroke="#3f8a49" stroke-width="6"><path d="M10 4.500H5.500q-2.500 0-2.500 2.500v11q0 2.500 2.500 2.500H11M18 20.500h4.500q2.500 0 2.500-2.500V7q0-2.500-2.500-2.500H18" /></g><path d="M18 0v9l-8-4.500zM10 16v9.500l8-4.500z" fill="#8cc792" stroke="#3f8a49" /><path d="M10 4.500H5.500q-2.500 0-2.500 2.500v11q0 2.500 2.500 2.500H11M18 20.500h4.500q2.500 0 2.500-2.500V7q0-2.500-2.500-2.500H17" stroke="#8cc792" stroke-width="3.600" /></svg>
            <svg class="wrench" width="30" height="28" viewBox="0 0 30 28" fill="none" aria-hidden="true"><path d="M4 1q7-1 8 5 0 2-1 3l4 4-3 3-4-4q-5 1-7-4l5 1 3-3z" fill="#f1f1f1" stroke="#888" stroke-width=".5" /><path d="M15 14l11 10" stroke="#c9a93e" stroke-width="5.500" stroke-linecap="round" /><path d="M15 14l11 10" stroke="#f6dc84" stroke-width="4" stroke-linecap="round" /><circle cx="25.500" cy="24" r="1" fill="#333" /></svg>
            {@render dots()}
          </div>
          <div class="row check off"><i></i><span use:fit={161}>Selected features only</span></div>
          <div class="row label"><span use:fit={133}>Selection attribute</span></div>
          <div class="row inputs"><div class="combo"><small>123</small><span use:fit={42}>RANK</span><i class="drop"></i></div></div>
          <div class="row label"><span use:fit={65}>Operator</span></div>
          <div class="row inputs"><div class="combo plain"><span>=</span><i class="drop"></i></div></div>
          <div class="row label"><span use:fit={116}>Value [optional]</span></div>
          <div class="row inputs"><div class="edit val">1</div></div>
          <div class="row label"><span use:fit={148}>Extracted (attribute)</span></div>
          <div class="row inputs"><div class="edit"><span use:fit={180}>[Create temporary layer]</span></div>{@render dots()}</div>
          <div class="row check"><i class="ticked"><svg width="20" height="20" viewBox="0 0 20 20" aria-hidden="true"><path d="M2 10l5 6L18 2" fill="none" stroke="#fff" stroke-width="2.300" /></svg></i><span use:fit={292}>Open output file after running algorithm</span></div>
          <div class="row label"><span use:fit={262}>Extracted (non-matching) [optional]</span></div>
          <div class="row inputs"><div class="edit"><span use:fit={96}>[Skip output]</span></div>{@render dots()}</div>
          <div class="row check off"><i></i><span use:fit={292}>Open output file after running algorithm</span></div>
        </div>
      </div>
      <div class="handle"><i class="tri"></i><i class="grip"></i></div>
      <article>
        <h2><span use:fit={122}>Extract by</span><span use:fit={107}>attribute</span></h2>
        <p>{#each help as [t, w]}<span use:fit={w}>{t}</span>{/each}</p>
      </article>
    </div>
    <div class="progress"><div class="track"><span use:fit={25}>0%</span></div><button class="btn idle"><span use:fit={48}>Cancel</span></button></div>
    <div class="actions">
      <button class="btn adv"><span use:fit={70}>Advanced</span><i class="drop"></i></button>
      <button class="btn batch"><span use:fit={170}>Run as Batch Process...</span></button>
      <button class="btn run"><span use:fit={29}>Run</span></button>
      <button class="btn cl"><span use:fit={39}>Close</span></button>
      <button class="btn hp"><span use:fit={33}>Help</span></button>
    </div>
  </section>
</div>

<style>
  :global(body) { overflow: hidden; background: #323232; }
  .desktop { position: relative; width: 1792px; height: 937px; overflow: hidden; background: #323232; color: #b4b4b4; font: 17px/22px "Open Sans", "Noto Sans", sans-serif; }
  .desktop * { box-sizing: border-box; }
  span, em, b { white-space: pre; }
  em { font-style: normal; display: inline-block; }
  svg { display: block; flex: none; overflow: visible; }
  .map, .peek svg { overflow: hidden; }
  button { font: inherit; color: inherit; margin: 0; padding: 0; border: 1px solid #202020; }
  .drop { display: block; flex: none; width: 0; height: 0; border: 4px solid transparent; border-top: 7px solid #a8a8a8; border-bottom: 0; }
  .sep { display: block; width: 2px; height: 18px; background: #505050; }
  .sep.dark { background: #252525; height: 14px; }

  .bars { height: 229px; display: flex; flex-direction: column; }
  .bar { display: flex; align-items: center; height: 58px; flex: none; position: relative; margin-left: -34px; }
  .bar.first { height: 50px; padding-bottom: 11px; }
  .group { display: flex; align-items: center; width: 1760px; overflow: hidden; }
  .far { margin-left: 14px; }
  .cell { display: flex; justify-content: center; align-items: center; flex: none; height: 40px; }
  .peek { position: absolute; left: 765px; top: 0; }
  .bar.last { margin-left: -26px; height: 60px; gap: 15px; }

  .body { display: flex; height: 708px; }
  .dock { width: 368px; flex: none; display: flex; flex-direction: column; }
  .dock header { display: flex; height: 22px; align-items: center; padding-left: 119px; color: #9e9e9e; }
  .dock header span { display: inline-block; width: auto; }
  .float { margin-left: auto; margin-right: 3px; margin-top: -5px; }
  .tools { display: flex; height: 48px; align-items: center; }
  .tools > span, .ftools > span { display: flex; justify-content: center; flex: none; }
  .tree { background: #202020; border: 2px solid #4d4d4d; border-left: 0; height: 625px; padding-top: 1px; padding-right: 1px; }
  .layer { display: flex; align-items: center; height: 36px; border-bottom: 2px solid #303030; color: #e2e2e2; font-size: 17.500px; padding-right: 10px; padding-top: 1px; position: relative; }
  .layer.on { background: #107000; border-color: #2c2c2c; height: 38px; padding-bottom: 0; margin-bottom: -2px; }
  .layer.off { font-style: italic; }
  .layer:not(.on) { height: 36px; padding-top: 2px; }
  .layer.on b { text-decoration: underline; text-underline-offset: 3px; text-decoration-thickness: 1px; }
  .eye { width: 36px; margin-right: -6px; }
  .sym { width: 34px; flex: none; display: flex; align-items: center; padding-left: 2px; }
  .sym i { display: block; }
  .line { width: 21px; height: 1.500px; }
  .road { width: 21px; height: 3px; }
  .dot { width: 10px; height: 10px; border-radius: 50%; margin-left: 5px; }
  .box { width: 24px; height: 24px; margin-left: -1px; border: 1px solid #777; }
  .mem { margin-left: auto; }
  .tabsb { display: flex; height: 13px; overflow: hidden; margin-top: 1px; color: #999; font-size: 16px; }
  .bt { width: 67px; flex: none; border-right: 2px solid #4d4d4d; padding-top: 3px; }
  .bt em { margin-left: -18px; }
  .bt.two { width: 99px; }
  .bt.two em { margin-left: 20px; margin-top: 7px; }

  main { width: 868px; flex: none; margin-left: 12px; display: flex; flex-direction: column; }
  .split { height: 3px; border-bottom: 1px solid #505050; flex: none; margin-left: -3px; }
  .ftitle { height: 45px; padding: 12px 0 0 154px; flex: none; }
  .ftitle span { display: inline-block; }
  .ftools { display: flex; align-items: center; height: 24px; flex: none; }
  .table { height: 361px; margin-top: 16px; border: 2px solid #474747; background: #202020; padding: 3px 0 0 3px; overflow: hidden; flex: none; font-size: 17px; position: relative; }
  .thead { display: flex; height: 31px; text-align: center; line-height: 27px; margin-bottom: 3px; }
  .corner { width: 69px; margin-right: 3px; background: #323232; }
  .h0, .h1, .h2 { background: #323232; border-bottom: 1px solid #555; border-right: 1px solid #555; }
  .h0 { width: 11px; } .h1 { width: 150px; } .h2 { width: 151px; }
  .trow { display: flex; height: 45px; line-height: 41px; border-bottom: 2px solid #1b1b1b; }
  .num { width: 69px; background: #323232; border-right: 2px solid #555; border-bottom: 1px solid #555; height: 45px; padding-left: 6px; padding-top: 1px; }
  .c0 { width: 12px; overflow: hidden; margin-right: 1px; border-right: 1px solid #1b1b1b; }
  .c0 em { margin-left: -4.500px; }
  .c1 { width: 149px; text-align: right; padding-right: 6px; border-right: 2px solid #1b1b1b; }
  .c2 { flex: 1; padding-left: 6px; }
  .alt .c0, .alt .c1, .alt .c2 { background: #323232; }
  .scroll { position: absolute; left: 0; right: 0; bottom: 1px; height: 17px; background: #545454; border-top: 1px solid #202020; }
  .status { display: flex; height: 26px; overflow: hidden; margin-top: 7px; padding-left: 2px; }
  .show { width: 206px; height: 40px; background: #505050; display: flex; padding: 7px 0 0 8px; gap: 5px; color: #999; font-size: 16px; }
  .show span { display: inline-block; line-height: 22px; margin-top: 1px; }
  .views { display: flex; margin-left: auto; padding-right: 15px; gap: 9px; }
  .views > svg { margin-top: 8px; }
  .active { width: 38px; height: 40px; border: 2px solid #b86f1d; padding: 6px 8px; }

  .right { flex: 1; background: #202020; border-left: 1px solid #505050; margin-top: 70px; border-top: 2px solid #444; display: flex; flex-direction: column; align-items: flex-end; color: #ddd; font-size: 17px; position: relative; }
  .right > * { flex: none; }
  .search { height: 32px; width: 100%; border-bottom: 3px solid #505050; }
  .picked { background: #107000; width: 100%; height: 27px; margin-top: 29px; }
  .algs { width: 56px; margin-top: 244px; line-height: 27px; display: flex; flex-direction: column; align-items: flex-start; color: #ccc; }
  .algs span:last-child { margin-left: -10px; }
  .stat { align-self: flex-start; display: flex; gap: 14px; padding-left: 70px; margin-top: 219px; align-items: center; color: #bbb; }
  .stat b { color: #52717f; font: 22px/22px "Liberation Serif", serif; width: 15px; }
  .sprout { align-self: flex-start; margin-left: 66px; margin-top: 5px; }

  .dialog { position: absolute; left: 730px; top: 10px; width: 1007px; height: 906px; border: 1px solid #555; border-right: 2px solid #4a4a4a; border-bottom: 2px solid #484848; border-radius: 11px; background: #323232; overflow: hidden; font-family: "Noto Sans", "Open Sans", sans-serif; font-size: 16.500px; display: flex; flex-direction: column; box-shadow: 0 10px 28px rgba(0, 0, 0, .42); }
  .dialog span { display: inline-block; }
  .title { height: 43px; background: #f3f3f3; color: #929292; display: flex; align-items: center; padding: 0 16px 2px 11px; gap: 5px; flex: none; font-size: 17px; }
  .title .x { margin-left: auto; }
  .upper { display: flex; margin: 18px 18px 0; height: 698px; flex: none; }
  .pane { width: 759px; display: flex; flex-direction: column; }
  .tabs { display: flex; align-items: flex-end; height: 36px; position: relative; z-index: 1; margin-bottom: -1px; }
  .tab { border: 1px solid #555; border-left: 0; width: 77px; height: 27px; text-align: center; line-height: 27px; }
  .tab.on { width: 133px; height: 36px; border-left: 1px solid #555; border-bottom: 0; background: #323232; line-height: 36px; }
  .form { border: 1px solid #555; border-right-width: 2px; flex: 1; padding: 16px 12px 0 13px; display: grid; align-content: start; grid-template-rows: 36px 39px 49px 22px 54px 26px 50px 30px 43px 34px 40px 42px 26px 50px 30px; }
  .row { display: flex; align-items: center; }
  .label { padding-left: 4px; }
  .combo { flex: 1; height: 35px; border: 1px solid #202020; background: linear-gradient(#555, #484848); display: flex; align-items: center; padding: 1px 9px 0 39px; position: relative; }
  .combo .drop { margin-left: auto; }
  .layerc { flex: none; width: 578px; padding-left: 5px; gap: 8px; }
  .combo small { font-size: 13px; color: #606060; width: 32px; margin-left: -32px; }
  .combo.plain { padding-left: 7px; }
  .loop { margin-left: 18px; }
  .wrench { margin-left: 25px; }
  .dots { width: 35px; height: 35px; background: #525252; margin-left: auto; display: flex; align-items: center; padding-left: 9px; }
  .dots .drop { margin-left: -1px; margin-top: 7px; }
  .edit { flex: 1; height: 34px; background: #202020; border: 1px solid #565656; color: #646464; padding-left: 6px; line-height: 32px; }
  .edit + :global(.dots) { margin-left: 10px; }
  .val { color: #ddd; }
  .check { gap: 8px; }
  .check i { width: 27px; height: 27px; border: 1px solid #545454; flex: none; }
  .check.off { color: #565656; }
  .check i.ticked { background: #107000; border: 1px solid #1b1b1b; padding: 2px; }
  .handle { width: 24px; position: relative; display: flex; flex-direction: column; align-items: center; }
  .tri { border: 4.500px solid transparent; border-left: 5px solid #8c8c8c; border-right: 0; margin-top: 5px; margin-right: 5px; }
  .grip { width: 3px; height: 26px; margin-top: 325px; margin-left: 3px; background: repeating-linear-gradient(#929292 0 3px, transparent 3px 4.600px); }
  article { width: 185px; background: #202020; color: #666; padding: 12px 0 0 10px; }
  h2 { margin: 0; font-size: 24.500px; line-height: 30px; color: #555; display: flex; flex-direction: column; align-items: flex-start; }
  p { margin: 16px 0 0; display: flex; flex-direction: column; align-items: flex-start; line-height: 21px; }
  .progress { display: flex; margin: 42px 17px 0; justify-content: space-between; align-items: center; flex: none; height: 40px; }
  .track { width: 898px; height: 40px; border: 1px solid #555; border-bottom-width: 2px; text-align: center; line-height: 36px; color: #ddd; }
  .btn { background: linear-gradient(#535353, #494949); height: 35px; display: flex; align-items: center; justify-content: center; white-space: nowrap; }
  .idle { background: #323232; color: #525252; width: 63px; }
  .actions { display: flex; margin: 9px 17px 0; }
  .adv { width: 104px; justify-content: flex-start; padding-left: 6px; }
  .adv .drop { margin: 14px 0 0 12px; border-width: 6px 5px 0; border-top-color: #8e8e8e; }
  .batch { width: 184px; margin-left: 8px; }
  .run { width: 45px; margin-left: auto; }
  .cl { width: 55px; margin-left: 9px; }
  .hp { width: 48px; margin-left: 8px; }
</style>
